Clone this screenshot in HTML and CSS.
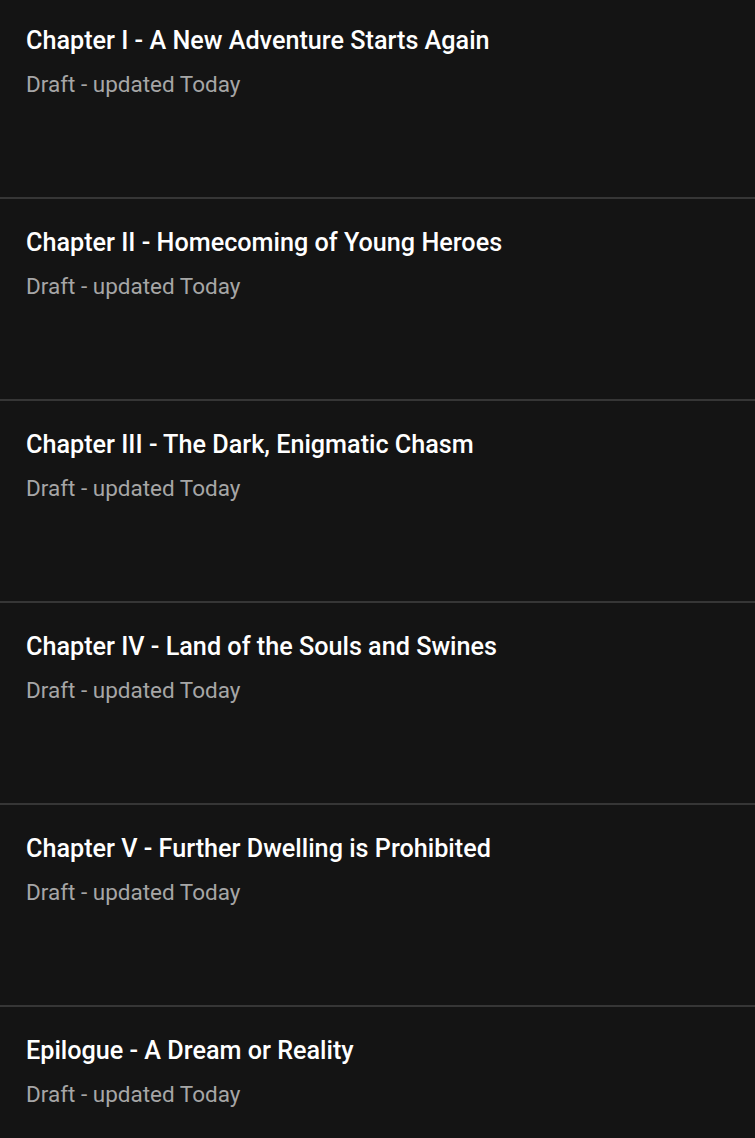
FILE: index.html
```html
<!DOCTYPE html>
<html lang="en">
<head>
    <meta charset="UTF-8">
    <meta name="viewport" content="width=device-width, initial-scale=1.0">
    <title>Chapters</title>
    <link rel="stylesheet" href="styles.css">
</head>
<body>
    <ul class="chapter-list">
        <li class="chapter">
            <h2 class="chapter-title">Chapter I - A New Adventure Starts Again</h2>
            <p class="chapter-status">Draft - updated Today</p>
        </li>
        <li class="chapter">
            <h2 class="chapter-title">Chapter II - Homecoming of Young Heroes</h2>
            <p class="chapter-status">Draft - updated Today</p>
        </li>
        <li class="chapter">
            <h2 class="chapter-title">Chapter III - The Dark, Enigmatic Chasm</h2>
            <p class="chapter-status">Draft - updated Today</p>
        </li>
        <li class="chapter">
            <h2 class="chapter-title">Chapter IV - Land of the Souls and Swines</h2>
            <p class="chapter-status">Draft - updated Today</p>
        </li>
        <li class="chapter">
            <h2 class="chapter-title">Chapter V - Further Dwelling is Prohibited</h2>
            <p class="chapter-status">Draft - updated Today</p>
        </li>
        <li class="chapter">
            <h2 class="chapter-title">Epilogue - A Dream or Reality</h2>
            <p class="chapter-status">Draft - updated Today</p>
        </li>
    </ul>
</body>
</html>
```

FILE: styles.css
```css
body {
    margin: 0;
    background: #141414;
    font-family: Roboto, 'Noto Sans', sans-serif;
    overflow: hidden;
}

.chapter-list {
    list-style: none;
    margin: 0;
    padding: 0;
}

.chapter {
    height: 202px;
    padding: 28px 26px 0;
    box-sizing: border-box;
    border-bottom: 2px solid #363636;
}

.chapter:first-child {
    height: 199px;
    padding-top: 25px;
}

.chapter:last-child {
    border-bottom: none;
}

.chapter-title {
    margin: 0;
    font-size: 25.2px;
    line-height: 32px;
    font-weight: 500;
    color: #ffffff;
}

.chapter-status {
    margin: 13px 0 0;
    font-size: 22.5px;
    line-height: 28px;
    font-weight: 400;
    color: #a6a6a6;
}
```
